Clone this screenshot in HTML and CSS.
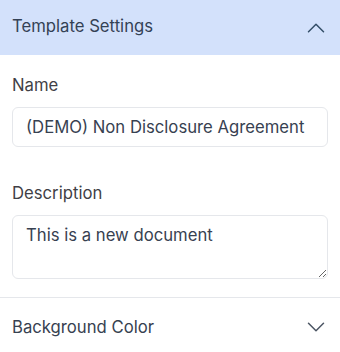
FILE: index.html
```html
<!DOCTYPE html>
<html lang="en">
<head>
    <meta charset="UTF-8">
    <meta name="viewport" content="width=device-width, initial-scale=1.0">
    <title>Template Settings</title>
    <link rel="stylesheet" href="styles.css">
</head>
<body>

    <div class="settings-panel">
        <div class="section open">
            <div class="section-header">
                <span class="section-title">Template Settings</span>
                <svg class="chevron" viewBox="0 0 24 24" fill="none" stroke="currentColor" stroke-width="1.5">
                    <path stroke-linecap="round" stroke-linejoin="round" d="M4.5 15.75l7.5-7.5 7.5 7.5" />
                </svg>
            </div>
            <div class="section-body">
                <div class="field">
                    <label for="tplName">Name</label>
                    <input type="text" class="text-input" id="tplName" value="(DEMO) Non Disclosure Agreement">
                </div>
                <div class="field">
                    <label for="tplDesc">Description</label>
                    <textarea class="text-input" id="tplDesc" rows="2">This is a new document</textarea>
                </div>
            </div>
        </div>

        <div class="section">
            <div class="section-header">
                <span class="section-title">Background Color</span>
                <svg class="chevron" viewBox="0 0 24 24" fill="none" stroke="currentColor" stroke-width="1.5">
                    <path stroke-linecap="round" stroke-linejoin="round" d="M19.5 8.25l-7.5 7.5-7.5-7.5" />
                </svg>
            </div>
        </div>
    </div>

</body>
</html>
```

FILE: styles.css
```css
body {
    font-family: Inter, "Noto Sans", sans-serif;
    margin: 0;
    background-color: white;
    color: #374151;
}
.settings-panel {
    width: 340px;
}
.section {
    border-bottom: 1px solid #e5e7eb;
}
.section-header {
    display: flex;
    align-items: center;
    justify-content: space-between;
    height: 58px;
    padding: 0 12px;
    box-sizing: border-box;
}
.section.open .section-header {
    height: 55px;
    background-color: #d3e1fb;
    color: #334155;
}
.section-title {
    font-size: 16.7px;
    line-height: 24px;
}
.section.open .section-title {
    margin-bottom: 4px;
}
.chevron {
    width: 24px;
    height: 24px;
    color: #4b5563;
}
.section.open .chevron {
    color: #334e68;
}
.section-body {
    padding: 18px 12px 18px 12px;
}
.field {
    display: flex;
    flex-direction: column;
}
.field + .field {
    margin-top: 34px;
}
.field label {
    font-size: 16.7px;
    line-height: 24px;
    color: #3f3f46;
    margin-bottom: 10px;
}
.text-input {
    font-family: inherit;
    font-size: 16.7px;
    line-height: 24px;
    color: #374151;
    border: 1px solid #e5e7eb;
    border-radius: 6px;
    padding: 7px 13px;
    margin: 0;
    outline: none;
    box-sizing: border-box;
    width: 100%;
}
textarea.text-input {
    resize: vertical;
    display: block;
}
```
